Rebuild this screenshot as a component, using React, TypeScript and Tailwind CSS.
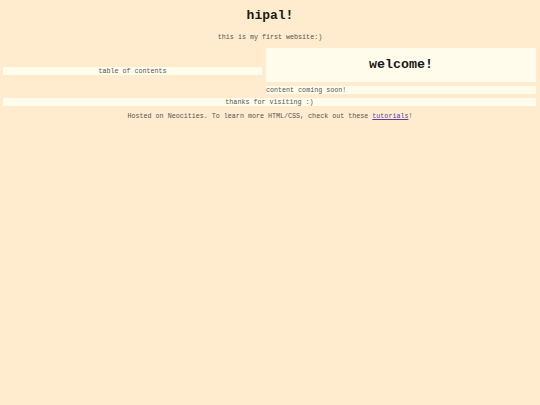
export default function App() {
  return (
    <div
      className="min-h-[405px] w-full bg-[#ffebcd] text-[#555] pt-[9px]"
      style={{ fontFamily: '"Liberation Mono", "Courier New", monospace' }}
    >
      <h1 className="text-center text-[13px] leading-[14px] font-bold text-[#1a1a1a]">hipal!</h1>
      <p className="mt-[10px] text-center text-[6.7px] leading-[8px]">this is my first website:)</p>

      <div className="mt-[7px] flex gap-[4px] pl-[3px] pr-[4px]">
        <div className="flex flex-1 items-center">
          <div className="w-full bg-[#fffcec] text-center text-[6.7px] leading-[8px]">table of contents</div>
        </div>
        <div className="flex w-[270px] flex-col gap-[4px]">
          <div className="flex h-[34px] items-center justify-center bg-[#fffcec] text-[13.3px] font-bold text-[#1a1a1a]">
            welcome!
          </div>
          <div className="bg-[#fffcec] text-[6.7px] leading-[8px]">content coming soon!</div>
        </div>
      </div>

      <div className="mx-[4px] ml-[3px] mt-[4px] bg-[#fffcec] text-center text-[6.7px] leading-[8px]">
        thanks for visiting :)
      </div>

      <p className="mt-[6px] text-center text-[6.7px] leading-[8px]">
        Hosted on Neocities. To learn more HTML/CSS, check out these{' '}
        <a href="#" className="text-[#5b3fa8] underline">tutorials</a>!
      </p>
    </div>
  );
}
